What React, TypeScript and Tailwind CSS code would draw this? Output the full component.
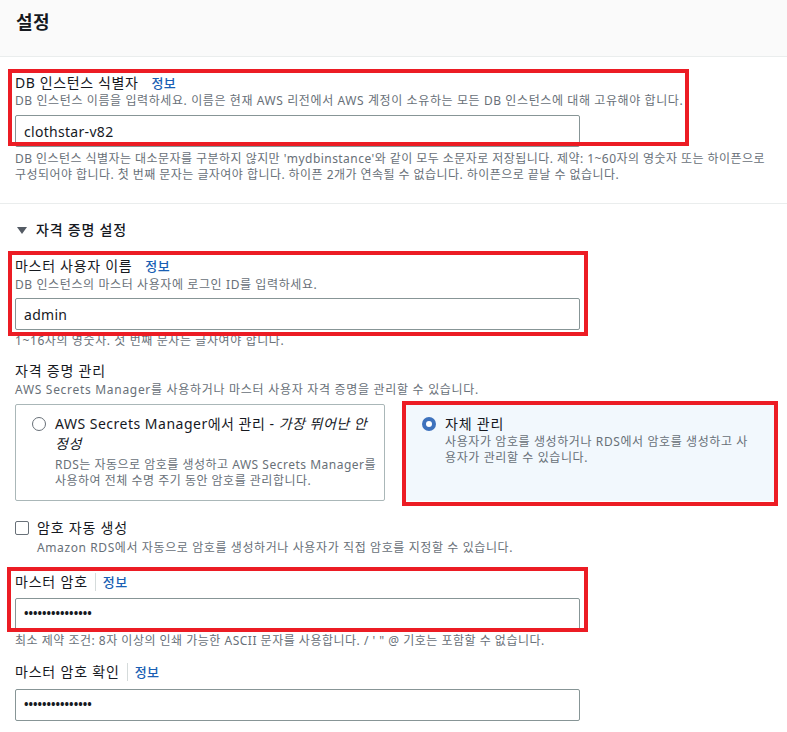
import React from 'react';

const InfoLink: React.FC<{ divider?: boolean }> = ({ divider }) => (
  <span className="flex items-center">
    {divider && <span className="mx-[7px] h-[18px] w-px bg-[#d5dbdb]" />}
    <a href="#" className="text-[13px] font-medium tracking-[0.5px] text-[#1a5fb4]">정보</a>
  </span>
);

const Annotation: React.FC<{ className: string }> = ({ className }) => (
  <div className={`pointer-events-none absolute border-[4px] border-[#ec1c24] ${className}`} />
);

const TextInput: React.FC<{ value: string; password?: boolean }> = ({ value, password }) => (
  <div className="flex h-[32px] w-[565px] items-center rounded-[2px] border border-[#879596] bg-white px-[8px]">
    {password ? (
      <span className="text-[12px] font-bold leading-none tracking-[0px] text-[#16191f]">{value}</span>
    ) : (
      <span className="text-[14px] tracking-[0.3px] text-[#16191f]">{value}</span>
    )}
  </div>
);

export default function App() {
  return (
    <div className="min-h-screen w-full bg-white font-['Noto_Sans','Noto_Sans_CJK_KR',sans-serif] text-[#16191f]">
      {/* Header */}
      <div className="h-[57px] border-b border-[#eaeded] bg-[#fafafa] px-[16px] pt-[9px]">
        <h2 className="text-[18px] font-bold leading-[26px] tracking-[0.5px]">설정</h2>
      </div>

      {/* Identifier */}
      <div className="px-[15px] pt-[16px] pb-[20px]">
        <div className="relative">
          <div className="flex items-center gap-[13px] text-[14px] leading-[20px] tracking-[0.6px]">
            <span>DB 인스턴스 식별자</span>
            <InfoLink />
          </div>
          <p className="text-[12px] leading-[16px] tracking-[0.6px] text-[#687078]">
            DB 인스턴스 이름을 입력하세요. 이름은 현재 AWS 리전에서 AWS 계정이 소유하는 모든 DB 인스턴스에 대해 고유해야 합니다.
          </p>
          <div className="mt-[6px]">
            <TextInput value="clothstar-v82" />
          </div>
          <Annotation className="-left-[7px] -top-[4px] h-[77px] w-[681px]" />
        </div>
        <p className="mt-[4px] max-w-[772px] text-[12px] leading-[16px] tracking-[0.45px] text-[#687078]">
          DB 인스턴스 식별자는 대소문자를 구분하지 않지만 'mydbinstance'와 같이 모두 소문자로 저장됩니다. 제약: 1~60자의 영숫자 또는 하이픈으로 구성되어야 합니다. 첫 번째 문자는 글자여야 합니다. 하이픈 2개가 연속될 수 없습니다. 하이픈으로 끝날 수 없습니다.
        </p>
      </div>

      {/* Credentials */}
      <div className="border-t border-[#eaeded] px-[15px] pt-[16px]">
        <div className="flex items-center gap-[8px] text-[14px] leading-[20px] tracking-[0.8px] text-[#16191f]">
          <svg width="12" height="12" viewBox="0 0 12 12" className="ml-[1px]">
            <path d="M1 3 L11 3 L6 10 Z" fill="#545b64" />
          </svg>
          <span className="font-medium">자격 증명 설정</span>
        </div>

        <div className="relative mt-[16px]">
          <div className="flex items-center gap-[13px] text-[14px] leading-[20px] tracking-[0.7px]">
            <span>마스터 사용자 이름</span>
            <InfoLink />
          </div>
          <p className="mt-[1px] text-[12px] leading-[16px] tracking-[0.6px] text-[#687078]">
            DB 인스턴스의 마스터 사용자에 로그인 ID를 입력하세요.
          </p>
          <div className="mt-[5px]">
            <TextInput value="admin" />
          </div>
          <Annotation className="-left-[7px] -top-[5px] h-[85px] w-[580px]" />
        </div>
        <p className="mt-[3px] text-[12px] leading-[16px] tracking-[0.6px] text-[#687078]">
          1~16자의 영숫자. 첫 번째 문자는 글자여야 합니다.
        </p>

        <div className="mt-[12px] text-[14px] leading-[20px] tracking-[0.8px]">자격 증명 관리</div>
        <p className="mt-[1px] text-[12px] leading-[16px] tracking-[0.7px] text-[#687078]">
          AWS Secrets Manager를 사용하거나 마스터 사용자 자격 증명을 관리할 수 있습니다.
        </p>

        <div className="mt-[6px] grid w-[760px] grid-cols-2 gap-[20px]">
          <div className="flex h-[97px] gap-[9px] rounded-[2px] border border-[#aab7b8] bg-white pl-[16px] pr-[4px] pt-[9px]">
            <span className="mt-[3px] h-[14px] w-[14px] shrink-0 rounded-full border-[1.5px] border-[#687078] bg-white" />
            <div>
              <div className="text-[14px] leading-[20px] tracking-[0.5px]">
                AWS Secrets Manager에서 관리 - <i>가장 뛰어난 안정성</i>
              </div>
              <p className="mt-[3px] text-[12px] leading-[16px] tracking-[0.5px] text-[#687078]">
                RDS는 자동으로 암호를 생성하고 AWS Secrets Manager를 사용하여 전체 수명 주기 동안 암호를 관리합니다.
              </p>
            </div>
          </div>

          <div className="relative">
            <div className="flex h-[97px] gap-[9px] rounded-[2px] bg-[#f2f8fd] pl-[17px] pr-[20px] pt-[10px]">
              <span className="mt-[3px] flex h-[14px] w-[14px] shrink-0 items-center justify-center rounded-full bg-[#3e72bd]">
                <span className="h-[6px] w-[6px] rounded-full bg-white" />
              </span>
              <div>
                <div className="text-[14px] leading-[20px] tracking-[0.8px]">자체 관리</div>
                <p className="text-[12px] leading-[16px] tracking-[0.6px] text-[#687078]">
                  사용자가 암호를 생성하거나 RDS에서 암호를 생성하고 사용자가 관리할 수 있습니다.
                </p>
              </div>
            </div>
            <Annotation className="-left-[3px] -top-[3px] h-[105px] w-[376px]" />
          </div>
        </div>

        <div className="mt-[17px] flex items-center gap-[8px] text-[14px] leading-[20px] tracking-[0.8px]">
          <span className="h-[14px] w-[14px] rounded-[2px] border-[1.5px] border-[#687078] bg-white" />
          <span>암호 자동 생성</span>
        </div>
        <p className="ml-[22px] mt-[2px] text-[12px] leading-[16px] tracking-[0.6px] text-[#687078]">
          Amazon RDS에서 자동으로 암호를 생성하거나 사용자가 직접 암호를 지정할 수 있습니다.
        </p>

        <div className="relative mt-[16px]">
          <div className="flex items-center text-[14px] leading-[20px] tracking-[0.8px]">
            <span>마스터 암호</span>
            <InfoLink divider />
          </div>
          <div className="mt-[6px]">
            <TextInput value="•••••••••••••••" password />
          </div>
          <Annotation className="-left-[8px] -top-[5px] h-[65px] w-[581px]" />
        </div>
        <p className="mt-[3px] text-[12px] leading-[16px] tracking-[0.5px] text-[#687078]">
          최소 제약 조건: 8자 이상의 인쇄 가능한 ASCII 문자를 사용합니다. / ' " @ 기호는 포함할 수 없습니다.
        </p>

        <div className="mt-[13px] flex items-center text-[14px] leading-[20px] tracking-[0.8px]">
          <span>마스터 암호 확인</span>
          <InfoLink divider />
        </div>
        <div className="mt-[7px] pb-[20px]">
          <TextInput value="•••••••••••••••" password />
        </div>
      </div>
    </div>
  );
}
